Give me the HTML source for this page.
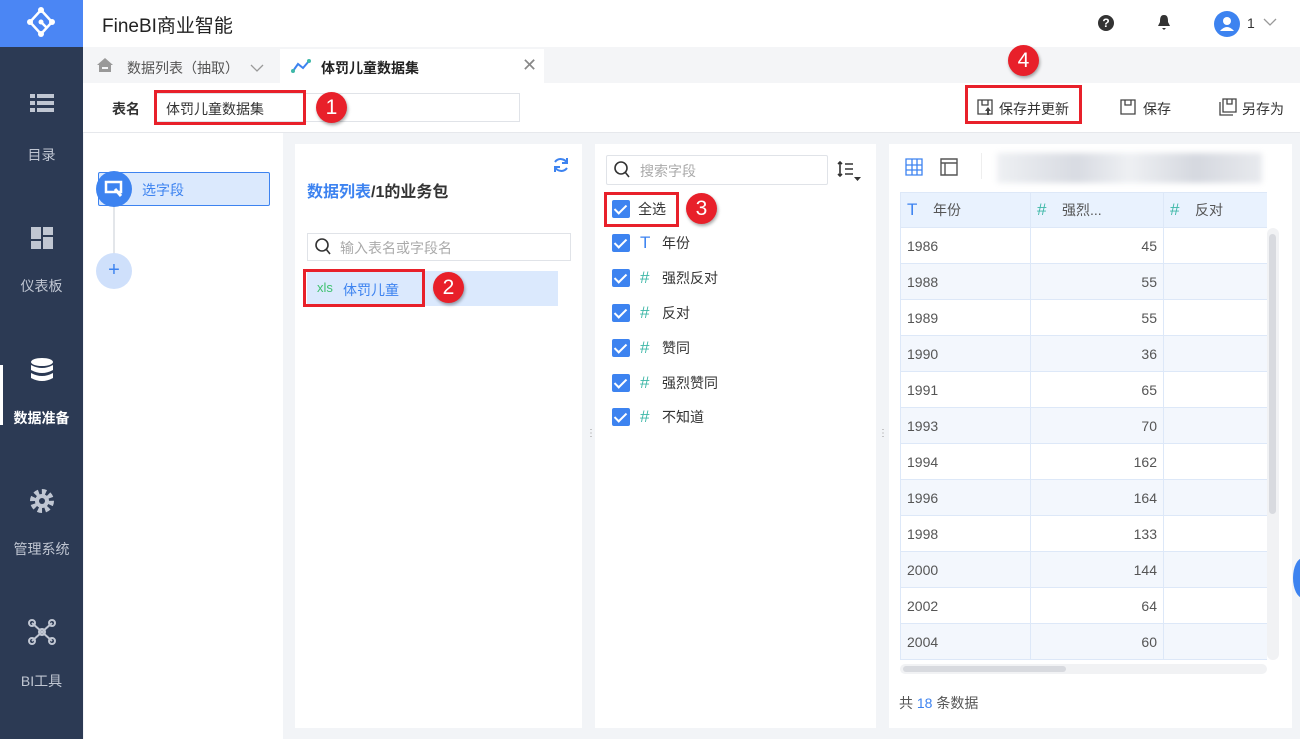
<!DOCTYPE html>
<html><head><meta charset="utf-8"><style>
*{box-sizing:border-box;margin:0;padding:0}
body{width:1300px;height:739px;overflow:hidden;font-family:"Liberation Sans","Noto Sans CJK SC",sans-serif;background:#f2f4f7;position:relative;font-size:14px;color:#333}
.abs{position:absolute}
.side{left:0;top:0;width:83px;height:739px;background:#2c3a54}
.logo{left:0;top:0;width:83px;height:47px;background:#4b86f4}
.si{left:0;width:83px;text-align:center;color:#c0c6d2;font-size:14px}
.top{left:83px;top:0;width:1217px;height:47px;background:#fff}
.tabs{left:83px;top:47px;width:1217px;height:36px;background:#f4f5f7}
.row{left:83px;top:83px;width:1217px;height:50px;background:#fff;border-bottom:1px solid #e6e8ec}
.red{border:3px solid #e8202a;position:absolute}
.badge{position:absolute;width:31px;height:31px;border-radius:50%;background:#e8202a;color:#fff;font-size:21px;text-align:center;line-height:31px;box-shadow:1px 2px 3px rgba(0,0,0,.35)}
.panel{background:#fff}
.cb{position:absolute;left:612px;width:18px;height:18px;background:#3d83f0;border-radius:2px}
.cb:after{content:"";position:absolute;left:5px;top:2px;width:5px;height:10px;border:solid #fff;border-width:0 2px 2px 0;transform:rotate(45deg)}
.fl{position:absolute;left:612px;font-size:14px;color:#333;line-height:18px}
.fl b{font-weight:normal;color:#3fb8a8;position:absolute;left:28px;top:0;font-size:17px;line-height:18px}
.fl span{position:absolute;left:50px;white-space:nowrap}
table{border-collapse:collapse;font-size:14px;color:#555}
td{height:36px;border:1px solid #dde8f8;padding:0 6px}
tr.h td{height:35px;background:#e9f2fe}
tr:nth-child(odd):not(.h) td{background:#f3f7fd}
</style></head><body>
<div class="abs side"></div>
<div class="abs logo"><svg width="83" height="47"><g fill="none" stroke="#fff" stroke-width="2.5"><path d="M41 10 L30 22 L41 34 L52 22 Z M41 22 L47 28"/></g><g fill="#fff"><circle cx="41" cy="10" r="3"/><circle cx="30" cy="22" r="3"/><circle cx="41" cy="34" r="3"/><circle cx="52" cy="22" r="3"/><circle cx="41" cy="22" r="2.5"/></g></svg></div>
<div class="abs si" style="top:92px"><svg width="26" height="22"><g fill="#c0c6d2"><rect x="1" y="2" width="5" height="4"/><rect x="8" y="2" width="17" height="4"/><rect x="1" y="9" width="5" height="4"/><rect x="8" y="9" width="17" height="4"/><rect x="1" y="16" width="5" height="4"/><rect x="8" y="16" width="17" height="4"/></g></svg></div>
<div class="abs si" style="top:145px">目录</div>
<div class="abs si" style="top:226px"><svg width="24" height="24"><g fill="#c0c6d2"><rect x="1" y="1" width="10" height="12"/><rect x="13" y="1" width="10" height="8"/><rect x="1" y="15" width="10" height="8"/><rect x="13" y="11" width="10" height="12"/></g></svg></div>
<div class="abs si" style="top:276px">仪表板</div>
<div class="abs" style="left:0;top:365px;width:3px;height:60px;background:#fff"></div>
<div class="abs si" style="top:357px"><svg width="24" height="26"><g fill="#fff"><ellipse cx="12" cy="5" rx="11" ry="4"/><path d="M1 8 Q12 14 23 8 V13 Q12 19 1 13Z"/><path d="M1 16 Q12 22 23 16 V21 Q12 27 1 21Z"/></g></svg></div>
<div class="abs si" style="top:408px;color:#fff;font-weight:bold">数据准备</div>
<div class="abs si" style="top:488px"><svg width="26" height="26"><circle cx="13" cy="13" r="9" fill="none" stroke="#c0c6d2" stroke-width="6" stroke-dasharray="4 3"/><circle cx="13" cy="13" r="7" fill="#c0c6d2"/><circle cx="13" cy="13" r="3" fill="#2c3a54"/></svg></div>
<div class="abs si" style="top:539px">管理系统</div>
<div class="abs si" style="top:619px"><svg width="28" height="26"><g stroke="#c0c6d2" stroke-width="2" fill="none"><path d="M4 4 L24 22 M24 4 L4 22"/><circle cx="4" cy="4" r="3"/><circle cx="24" cy="4" r="3"/><circle cx="4" cy="22" r="3"/><circle cx="24" cy="22" r="3"/><circle cx="14" cy="13" r="3"/></g></svg></div>
<div class="abs si" style="top:671px">BI工具</div>

<div class="abs top"></div>
<div class="abs" style="left:102px;top:11px;font-size:19px;color:#222">FineBI商业智能</div>
<div class="abs" style="left:1098px;top:15px;width:16px;height:16px;border-radius:50%;background:#333;color:#fff;font-size:12px;font-weight:bold;text-align:center;line-height:16px">?</div>
<div class="abs" style="left:1157px;top:14px"><svg width="14" height="17"><path d="M7 1 C3 1 3 5 3 8 L1 12 H13 L11 8 C11 5 11 1 7 1Z M5 14 H9 L7 16Z" fill="#333"/></svg></div>
<div class="abs" style="left:1214px;top:11px;width:26px;height:26px;border-radius:50%;background:#3d83f0"><svg width="26" height="26"><circle cx="13" cy="10" r="4" fill="#fff"/><path d="M6 20 Q13 12 20 20Z" fill="#fff"/></svg></div>
<div class="abs" style="left:1247px;top:15px;color:#333">1</div>
<div class="abs" style="left:1263px;top:14px"><svg width="14" height="10"><path d="M1 2 L7 8 L13 2" stroke="#999" fill="none" stroke-width="1.3"/></svg></div>

<div class="abs tabs"></div>
<div class="abs" style="left:96px;top:57px"><svg width="18" height="16"><path d="M9 1 L1 8 H3 V15 H15 V8 H17Z" fill="#999"/><rect x="6" y="10" width="6" height="2" fill="#f4f5f7"/></svg></div>
<div class="abs" style="left:127px;top:58px;color:#555">数据列表（抽取）</div>
<div class="abs" style="left:250px;top:60px"><svg width="14" height="10"><path d="M1 2 L7 8 L13 2" stroke="#999" fill="none" stroke-width="1.3"/></svg></div>
<div class="abs" style="left:280px;top:49px;width:264px;height:34px;background:#fff"></div>
<div class="abs" style="left:291px;top:58px"><svg width="20" height="16"><path d="M2 13 L7 6 L12 10 L18 3" stroke="#3d83f0" stroke-width="2" fill="none"/><circle cx="2" cy="13" r="2" fill="#3fb8a8"/><circle cx="18" cy="3" r="2" fill="#3fb8a8"/></svg></div>
<div class="abs" style="left:321px;top:58px;font-weight:bold;color:#222">体罚儿童数据集</div>
<div class="abs" style="left:522px;top:57px;color:#888;font-size:18px;line-height:16px">✕</div>

<div class="abs row"></div>
<div class="abs" style="left:112px;top:99px;font-weight:bold">表名</div>
<div class="abs" style="left:154px;top:93px;width:366px;height:29px;border:1px solid #e0e3e8;background:#fff"></div>
<div class="abs" style="left:166px;top:99px">体罚儿童数据集</div>
<div class="red" style="left:154px;top:90px;width:152px;height:35px"></div>
<div class="badge" style="left:316px;top:92px">1</div>

<div class="abs" style="left:976px;top:98px"><svg width="18" height="18"><path d="M2 2 H16 V16 H2Z M6 2 V7 H12 V2" stroke="#444" fill="none" stroke-width="1.3"/><path d="M12 9 L15 13 H13 V17 H11 V13 H9Z" fill="#444"/></svg></div>
<div class="abs" style="left:999px;top:99px;color:#333">保存并更新</div>
<div class="red" style="left:965px;top:85px;width:117px;height:39px"></div>
<div class="badge" style="left:1008px;top:45px">4</div>
<div class="abs" style="left:1119px;top:98px"><svg width="18" height="18"><path d="M2 2 H16 V16 H2Z M6 2 V7 H12 V2" stroke="#444" fill="none" stroke-width="1.3"/></svg></div>
<div class="abs" style="left:1143px;top:99px">保存</div>
<div class="abs" style="left:1218px;top:97px"><svg width="20" height="20"><path d="M5 2 H18 V15 H5Z M9 2 V7 H14 V2 M2 5 V18 H15" stroke="#444" fill="none" stroke-width="1.3"/></svg></div>
<div class="abs" style="left:1242px;top:99px">另存为</div>

<div class="abs panel" style="left:84px;top:133px;width:199px;height:606px"></div>
<div class="abs" style="left:113px;top:200px;width:2px;height:70px;background:#e3e6ea"></div>
<div class="abs" style="left:98px;top:172px;width:172px;height:34px;background:#dbe9fd;border:1px solid #3d83f0;border-radius:2px"></div>
<div class="abs" style="left:96px;top:171px;width:36px;height:36px;border-radius:50%;background:#3d83f0"><svg width="36" height="36"><rect x="10" y="11" width="15" height="10" fill="none" stroke="#fff" stroke-width="2.5"/><path d="M19 18 L25 25" stroke="#fff" stroke-width="3"/></svg></div>
<div class="abs" style="left:142px;top:180px;color:#3d83f0">选字段</div>
<div class="abs" style="left:96px;top:253px;width:36px;height:36px;border-radius:50%;background:#cfe0fb;color:#3d83f0;text-align:center;line-height:34px;font-size:20px">+</div>

<div class="abs panel" style="left:295px;top:144px;width:287px;height:584px"></div>
<div class="abs" style="left:552px;top:156px"><svg width="18" height="18"><path d="M15 7 A7 7 0 0 0 3 6 M3 11 A7 7 0 0 0 15 12" stroke="#3d83f0" stroke-width="2" fill="none"/><path d="M15 2 V7 H10 M3 16 V11 H8" stroke="#3d83f0" stroke-width="2" fill="none"/></svg></div>
<div class="abs" style="left:307px;top:178px;font-size:16px;font-weight:bold"><span style="color:#3d83f0">数据列表</span>/1的业务包</div>
<div class="abs" style="left:307px;top:233px;width:264px;height:28px;border:1px solid #e0e3e8"></div>
<div class="abs" style="left:314px;top:237px"><svg width="18" height="20"><circle cx="8" cy="8" r="6" stroke="#333" stroke-width="1.6" fill="none"/><path d="M12 12 L16 17" stroke="#333" stroke-width="1.6"/></svg></div>
<div class="abs" style="left:340px;top:238px;color:#aaa">输入表名或字段名</div>
<div class="abs" style="left:307px;top:271px;width:251px;height:35px;background:#dbe9fd"></div>
<div class="abs" style="left:317px;top:280px;color:#3fc270;font-size:13px">xls</div>
<div class="abs" style="left:343px;top:280px;color:#3d83f0">体罚儿童</div>
<div class="red" style="left:303px;top:269px;width:122px;height:38px"></div>
<div class="badge" style="left:433px;top:272px">2</div>
<div class="abs" style="left:586px;top:428px;color:#999;font-size:10px">⋮⋮</div>

<div class="abs panel" style="left:595px;top:144px;width:281px;height:584px"></div>
<div class="abs" style="left:606px;top:155px;width:222px;height:30px;border:1px solid #e0e3e8;border-radius:2px"></div>
<div class="abs" style="left:613px;top:160px"><svg width="18" height="20"><circle cx="8" cy="8" r="6" stroke="#333" stroke-width="1.6" fill="none"/><path d="M12 12 L16 17" stroke="#333" stroke-width="1.6"/></svg></div>
<div class="abs" style="left:640px;top:161px;color:#aaa">搜索字段</div>
<div class="abs" style="left:836px;top:160px"><svg width="26" height="22"><path d="M4 2 V16 M2 4 L4 2 L6 4 M2 14 L4 16 L6 14 M9 4 H17 M9 9 H17 M9 14 H17" stroke="#333" stroke-width="1.6" fill="none"/><path d="M18 17 H25 L21.5 21Z" fill="#333"/></svg></div>
<div class="cb" style="top:200px"></div><div class="fl" style="top:200px"><span style="left:26px">全选</span></div>
<div class="red" style="left:604px;top:192px;width:75px;height:35px"></div>
<div class="badge" style="left:686px;top:193px">3</div>
<div class="cb" style="top:234px"></div><div class="fl" style="top:234px"><b style="color:#3d83f0">T</b><span>年份</span></div>
<div class="cb" style="top:269px"></div><div class="fl" style="top:269px"><b>#</b><span>强烈反对</span></div>
<div class="cb" style="top:304px"></div><div class="fl" style="top:304px"><b>#</b><span>反对</span></div>
<div class="cb" style="top:339px"></div><div class="fl" style="top:339px"><b>#</b><span>赞同</span></div>
<div class="cb" style="top:374px"></div><div class="fl" style="top:374px"><b>#</b><span>强烈赞同</span></div>
<div class="cb" style="top:408px"></div><div class="fl" style="top:408px"><b>#</b><span>不知道</span></div>
<div class="abs" style="left:878px;top:428px;color:#999;font-size:10px">⋮⋮</div>

<div class="abs panel" style="left:889px;top:144px;width:403px;height:584px"></div>
<div class="abs" style="left:905px;top:158px"><svg width="18" height="18"><path d="M1 1 H17 V17 H1Z M1 7 H17 M1 12 H17 M7 1 V17 M12 1 V17" stroke="#3d83f0" stroke-width="1.3" fill="none"/></svg></div>
<div class="abs" style="left:940px;top:158px"><svg width="18" height="18"><path d="M1 1 H17 V17 H1Z M1 5 H17 M5 5 V17" stroke="#555" stroke-width="1.4" fill="none"/></svg></div>
<div class="abs" style="left:981px;top:153px;width:1px;height:26px;background:#eee"></div>
<div class="abs" style="left:997px;top:153px;width:265px;height:30px;background:linear-gradient(90deg,#eef0f3,#d8dbe2 30%,#eef0f3 50%,#d5d8df 75%,#e8eaee);filter:blur(3px)"></div>
<div class="abs" style="left:900px;top:192px;width:367px;height:468px;overflow:hidden">
<table style="width:420px">
<tr class="h"><td style="width:130px"><span style="color:#3d83f0;font-size:17px">T</span>&nbsp;&nbsp;&nbsp;&nbsp;年份</td><td style="width:133px"><span style="color:#3fb8a8;font-size:17px">#</span>&nbsp;&nbsp;&nbsp;&nbsp;强烈...</td><td><span style="color:#3fb8a8;font-size:17px">#</span>&nbsp;&nbsp;&nbsp;&nbsp;反对</td></tr>
<tr><td>1986</td><td align="right">45</td><td></td></tr>
<tr><td>1988</td><td align="right">55</td><td></td></tr>
<tr><td>1989</td><td align="right">55</td><td></td></tr>
<tr><td>1990</td><td align="right">36</td><td></td></tr>
<tr><td>1991</td><td align="right">65</td><td></td></tr>
<tr><td>1993</td><td align="right">70</td><td></td></tr>
<tr><td>1994</td><td align="right">162</td><td></td></tr>
<tr><td>1996</td><td align="right">164</td><td></td></tr>
<tr><td>1998</td><td align="right">133</td><td></td></tr>
<tr><td>2000</td><td align="right">144</td><td></td></tr>
<tr><td>2002</td><td align="right">64</td><td></td></tr>
<tr><td>2004</td><td align="right">60</td><td></td></tr>
<tr><td>2006</td><td align="right">50</td><td></td></tr>
</table></div>
<div class="abs" style="left:1267px;top:228px;width:12px;height:432px;background:#f1f2f4;border-radius:6px"></div>
<div class="abs" style="left:1269px;top:234px;width:7px;height:280px;background:#d8dadf;border-radius:4px"></div>
<div class="abs" style="left:900px;top:664px;width:367px;height:10px;background:#f1f2f4;border-radius:5px"></div>
<div class="abs" style="left:903px;top:666px;width:163px;height:6px;background:#d8dadf;border-radius:3px"></div>
<div class="abs" style="left:899px;top:693px;color:#555">共 <span style="color:#3d83f0">18</span> 条数据</div>
<div class="abs" style="left:1293px;top:558px;width:20px;height:40px;border-radius:50%;background:#3d83f0"></div>
</body></html>
